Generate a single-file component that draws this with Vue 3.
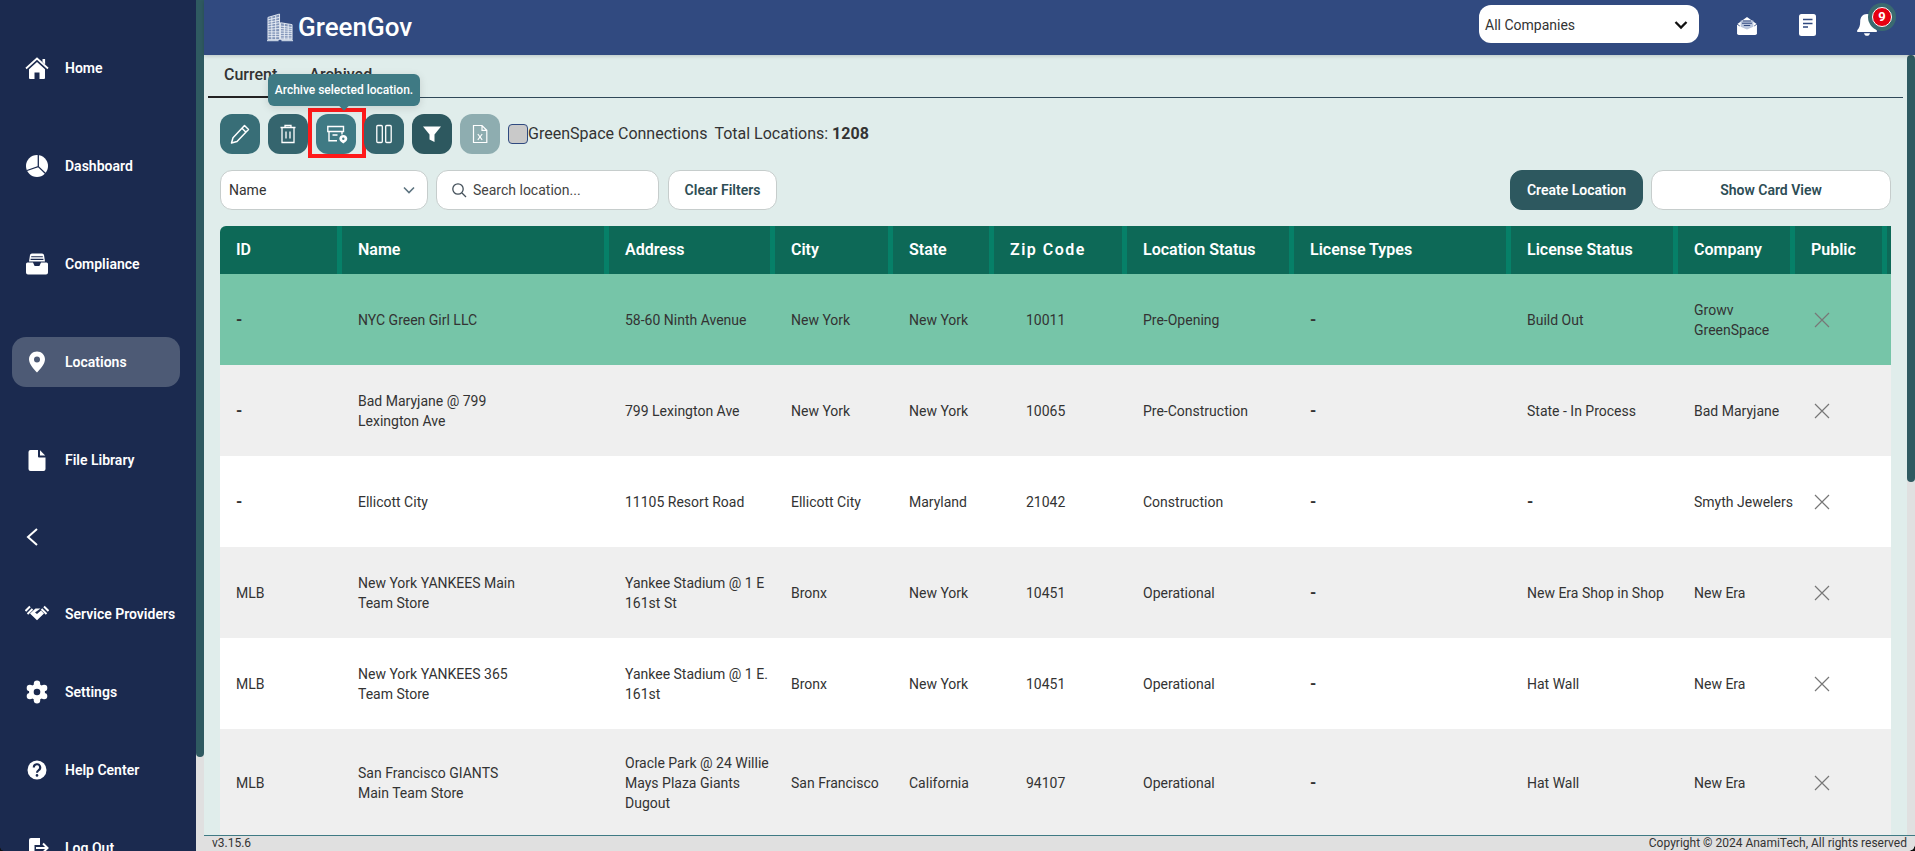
<script setup>
const rows = [
  { id: '-', name: 'NYC Green Girl LLC', address: '58-60 Ninth Avenue', city: 'New York', state: 'New York', zip: '10011', status: 'Pre-Opening', types: '-', license: 'Build Out', company: 'Growv\nGreenSpace', tone: 'picked' },
  { id: '-', name: 'Bad Maryjane @ 799\nLexington Ave', address: '799 Lexington Ave', city: 'New York', state: 'New York', zip: '10065', status: 'Pre-Construction', types: '-', license: 'State - In Process', company: 'Bad Maryjane', tone: 'grey' },
  { id: '-', name: 'Ellicott City', address: '11105 Resort Road', city: 'Ellicott City', state: 'Maryland', zip: '21042', status: 'Construction', types: '-', license: '-', company: 'Smyth Jewelers', tone: 'white' },
  { id: 'MLB', name: 'New York YANKEES Main\nTeam Store', address: 'Yankee Stadium @ 1 E\n161st St', city: 'Bronx', state: 'New York', zip: '10451', status: 'Operational', types: '-', license: 'New Era Shop in Shop', company: 'New Era', tone: 'grey' },
  { id: 'MLB', name: 'New York YANKEES 365\nTeam Store', address: 'Yankee Stadium @ 1 E.\n161st', city: 'Bronx', state: 'New York', zip: '10451', status: 'Operational', types: '-', license: 'Hat Wall', company: 'New Era', tone: 'white' },
  { id: 'MLB', name: 'San Francisco GIANTS\nMain Team Store', address: 'Oracle Park @ 24 Willie\nMays Plaza Giants\nDugout', city: 'San Francisco', state: 'California', zip: '94107', status: 'Operational', types: '-', license: 'Hat Wall', company: 'New Era', tone: 'grey', tall: true },
]
const heads = ['ID', 'Name', 'Address', 'City', 'State', 'Zip Code', 'Location Status', 'License Types', 'License Status', 'Company', 'Public']
const fields = ['id', 'name', 'address', 'city', 'state', 'zip', 'status', 'types', 'license', 'company']
</script>

<template>
  <div class="app">
    <aside class="side">
      <nav class="nav">
        <a class="item">
          <svg class="ni" viewBox="0 0 24 24"><path d="M1 12.5 12 2.5l11 10" fill="none" stroke="#fff" stroke-width="1.8"/><path d="M17.5 3h2.6v5.5l-2.6-2.4z" fill="#fff"/><path d="M4 13.2 12 6l8 7.2V22a1 1 0 0 1-1 1h-4.5v-6.5h-5V23H5a1 1 0 0 1-1-1z" fill="#fff"/></svg>
          <span>Home</span>
        </a>
        <a class="item">
          <svg class="ni" viewBox="0 0 24 24"><circle cx="12" cy="12" r="11" fill="#fff"/><path d="M13.3 0.8V12.6L2 16.5M13.3 12.6 21 20" fill="none" stroke="#1b2a4f" stroke-width="1.3"/></svg>
          <span>Dashboard</span>
        </a>
        <a class="item">
          <svg class="ni" viewBox="0 0 24 24"><path d="M4 9.500 5 3a2 2 0 0 1 2-1.600h10A2 2 0 0 1 19 3l1 6.500H4z" fill="#fff"/><path d="M6.200 4.800h11.600M5.600 7.400h12.800" stroke="#1b2a4f" stroke-width="1.100"/><path d="M2.500 10.500H8l1.600 3.400h4.800l1.600-3.400h5.500a1.500 1.500 0 0 1 1.500 1.500v8.500a2 2 0 0 1-2 2H3a2 2 0 0 1-2-2V12a1.500 1.500 0 0 1 1.500-1.500z" fill="#fff"/></svg>
          <span>Compliance</span>
        </a>
        <a class="item active">
          <svg class="ni" viewBox="0 0 24 24"><path fill-rule="evenodd" d="M12 1.500c4.500 0 8 3.400 8 7.800 0 5-5 10-8 13.200-3-3.200-8-8.200-8-13.200 0-4.400 3.500-7.800 8-7.800zm0 5a3 3 0 1 0 0 6 3 3 0 0 0 0-6z" fill="#fff"/></svg>
          <span>Locations</span>
        </a>
        <a class="item">
          <svg class="ni" viewBox="0 0 24 24"><path d="M5.500 2H13v6.500a1 1 0 0 0 1 1h6.500V21a2 2 0 0 1-2 2h-13a2 2 0 0 1-2-2V4a2 2 0 0 1 2-2z" fill="#fff"/><path d="M15 2.300 20.200 7.500H15z" fill="#fff"/></svg>
          <span>File Library</span>
        </a>
        <a class="collapse">
          <svg width="14" height="20" viewBox="0 0 14 20"><path d="M12 2 3 10l9 8" fill="none" stroke="#fff" stroke-width="2"/></svg>
        </a>
        <div class="lower">
          <a class="item low">
            <svg class="ni" viewBox="0 0 24 24"><path d="M.5 9 5 4.500M2.500 12 7.500 7M23.500 9 19 4.500M21.500 12 16.500 7" stroke="#fff" stroke-width="2" fill="none"/><path d="M5 11.500 10.500 6.500h5L10 10.500l2 1.500 4-3.500 3 3-7 6.800z" fill="#fff"/></svg>
            <span>Service Providers</span>
          </a>
          <a class="item low">
            <svg class="ni" viewBox="0 0 24 24"><g fill="#fff"><circle cx="12" cy="12" r="8"/><circle cx="12" cy="3.800" r="3.200"/><circle cx="12" cy="20.200" r="3.200"/><circle cx="4.900" cy="7.900" r="3.200"/><circle cx="19.100" cy="7.900" r="3.200"/><circle cx="4.900" cy="16.100" r="3.200"/><circle cx="19.100" cy="16.100" r="3.200"/></g><circle cx="12" cy="12" r="3.300" fill="#1b2a4f"/></svg>
            <span>Settings</span>
          </a>
          <a class="item low">
            <svg class="ni" viewBox="0 0 24 24"><circle cx="12" cy="12" r="9.500" fill="#fff"/><path d="M8.800 9.500a3.200 3.200 0 1 1 4.700 2.800c-1 .6-1.500 1.200-1.500 2.400" fill="none" stroke="#1b2a4f" stroke-width="2.100"/><circle cx="12" cy="17.400" r="1.300" fill="#1b2a4f"/></svg>
            <span>Help Center</span>
          </a>
          <a class="item low">
            <svg class="ni" viewBox="0 0 24 24"><path d="M6 2h9v7H9.500v6H15v7H6a2 2 0 0 1-2-2V4a2 2 0 0 1 2-2z" fill="#fff"/><path d="M11 12h11M18 7.500l4.500 4.500-4.500 4.500" fill="none" stroke="#fff" stroke-width="2"/></svg>
            <span>Log Out</span>
          </a>
        </div>
      </nav>
    </aside>
    <div class="side-bar"><div class="side-thumb"></div></div>

    <div class="main">
      <header class="top">
        <div class="brand">
          <svg class="logo" viewBox="0 0 28 30">
            <g fill="none" stroke="#eef2f8" stroke-width="0.900">
              <path d="M1 27V4l12-3.500V27z" fill="#8094b8"/>
              <path d="M14 27V9.500l12 2V27z" fill="#8094b8"/>
              <path d="M1 6.500 13 4M1 9l12-2M1 11.500l12-2M1 14l12-1.500M1 16.500l12-1M1 19h12M1 21.500h12M1 24h12M14 13l12 1.500M14 15.500l12 1M14 18l12 .5M14 20.500h12M14 23h12M14 25.500h12"/>
              <path d="M5 3v24M9 2v25M18 10v17M22 11v16"/>
            </g>
            <path d="M0 28h12M15 28h12" stroke="#c3cfe0" stroke-width="1.500"/>
          </svg>
          <span class="brand-name">GreenGov</span>
        </div>
        <div class="top-right">
          <div class="co-select">
            <span>All Companies</span>
            <svg width="14" height="10" viewBox="0 0 14 10"><path d="M1.500 2 7 7.500 12.500 2" fill="none" stroke="#111" stroke-width="2.300"/></svg>
          </div>
          <div class="top-ic">
            <svg width="22" height="19" viewBox="0 0 24 21"><path d="M1 9 12 1l11 8v10a2 2 0 0 1-2 2H3a2 2 0 0 1-2-2z" fill="#fff"/><path d="M5 5h14v7l-7 3-7-3z" fill="#b9c5dc"/><path d="M7.500 5.500h9M6.500 8h11M8.500 10.500h7" stroke="#314a80" stroke-width="1.100"/><path d="M1 9l3 2M23 9l-3 2" stroke="#314a80" stroke-width="1"/></svg>
          </div>
          <div class="top-ic">
            <svg width="17" height="22" viewBox="0 0 17 22"><rect x="0" y="0" width="17" height="22" rx="2.500" fill="#fff"/><path d="M4 5.500h9.500M4 9.500h9.500M4 13h5" stroke="#314a80" stroke-width="1.600"/></svg>
          </div>
          <div class="top-ic bell">
            <svg width="20" height="22" viewBox="0 0 20 22"><path d="M10 0c4.500 0 6.800 3.500 6.800 7.500 0 4 .8 6.500 3 8.800V18H.2v-1.700c2.200-2.300 3-4.800 3-8.800C3.200 3.500 5.500 0 10 0z" fill="#fff"/><path d="M7 19.200h6c-.3 1.700-1.500 2.600-3 2.600s-2.700-.9-3-2.600z" fill="#fff"/></svg>
            <span class="badge"><b>9</b></span>
          </div>
        </div>
      </header>

      <div class="mid">
        <section class="page">
          <div class="tabs">
            <span class="tab on">Current</span>
            <span class="tab">Archived</span>
          </div>

          <div class="tools">
            <button class="tb t1">
              <svg width="24" height="24" viewBox="0 0 24 24"><path d="M16.500 3.500 20.500 7.500 9 19.500 3.500 21l1.500-5.300z M14 6.200l4 4" fill="none" stroke="#fff" stroke-width="1.500" stroke-linejoin="round"/></svg>
            </button>
            <button class="tb t2">
              <svg width="24" height="24" viewBox="0 0 24 24"><path d="M4.500 5.500h15M9 5.500V3.500h6v2M6 5.500V20.500h12V5.500M10 9.500v7M14 9.500v7" fill="none" stroke="#fff" stroke-width="1.300"/></svg>
            </button>
            <button class="tb t3">
              <svg width="24" height="24" viewBox="0 0 24 24"><path d="M3.800 4.500h15.700v5H3.800zM5 9.500V18.800H13M18 9.500v3M8.500 13h5" fill="none" stroke="#fff" stroke-width="1.400"/><path fill-rule="evenodd" d="M19.300 13c2.200 0 4 1.700 4 3.700 0 1.900-2.400 3.600-4 4.800-1.600-1.200-4-2.900-4-4.800 0-2 1.800-3.700 4-3.700zm0 2.500a1.200 1.200 0 1 0 0 2.400 1.200 1.200 0 0 0 0-2.400z" fill="#fff"/></svg>
              <span class="mark"></span>
            </button>
            <button class="tb t2">
              <svg width="24" height="24" viewBox="0 0 24 24"><rect x="4.800" y="3.500" width="5.500" height="17" rx="1" fill="none" stroke="#fff" stroke-width="1.300"/><rect x="13.700" y="3.500" width="5.500" height="17" rx="1" fill="none" stroke="#fff" stroke-width="1.300"/></svg>
            </button>
            <button class="tb t5">
              <svg width="24" height="24" viewBox="0 0 24 24"><path d="M3 4.500h18l-6.500 8v7.500l-5-2.500v-5z" fill="#fff"/></svg>
            </button>
            <button class="tb t6">
              <svg width="24" height="24" viewBox="0 0 24 24"><path d="M5.500 3.500H14l4.800 4.800v12.200H5.500zM14 3.500v4.800h4.800" fill="none" stroke="#fff" stroke-width="1.200"/><path d="M9.800 12l4.400 5.800M14.200 12l-4.400 5.800" stroke="#fff" stroke-width="1.100"/></svg>
            </button>
            <label class="check"><i class="box"></i><span class="conn">GreenSpace Connections</span></label>
            <span class="total">Total Locations: <b>1208</b></span>
            <div class="tip">Archive selected location.</div>
          </div>

          <div class="filters">
            <div class="field pick">
              <span>Name</span>
              <svg width="14" height="10" viewBox="0 0 14 10"><path d="M2 2.500 7 7.500l5-5" fill="none" stroke="#5d7480" stroke-width="1.600"/></svg>
            </div>
            <div class="field search">
              <svg width="18" height="18" viewBox="0 0 18 18"><circle cx="8" cy="8" r="5.200" fill="none" stroke="#44505a" stroke-width="1.300"/><path d="M12 12l4 4" stroke="#44505a" stroke-width="1.300"/></svg>
              <span>Search location...</span>
            </div>
            <button class="btn clear">Clear Filters</button>
            <div class="spacer"></div>
            <button class="btn create">Create Location</button>
            <button class="btn card">Show Card View</button>
          </div>

          <div class="table">
            <div class="row head">
              <div v-for="h in heads" :key="h" class="hc" :class="{ 'hc-zip': h === 'Zip Code' }">{{ h }}</div>
              <div></div>
            </div>
            <div v-for="(r, i) in rows" :key="i" class="row body" :class="[r.tone, { tall: r.tall }]">
              <div v-for="f in fields" :key="f" class="c" :class="{ 'c-zip': f === 'zip', dash: r[f] === '-' }">{{ r[f] }}</div>
              <div class="c">
                <svg width="22" height="22" viewBox="0 0 22 22"><path d="M4 4l14 14M18 4 4 18" stroke="#777" stroke-width="1.200"/></svg>
              </div>
              <div></div>
            </div>
          </div>
        </section>
        <div class="page-bar"><div class="page-thumb"></div></div>
      </div>

      <footer class="foot">
        <span>v3.15.6</span>
        <span>Copyright © 2024 AnamiTech, All rights reserved</span>
      </footer>
    </div>
    <i class="corner left"></i>
    <i class="corner right"></i>
  </div>
</template>

<style>
html, body { margin: 0; overflow: hidden; }
</style>

<style scoped>
.app {
  position: relative;
  display: flex;
  width: 1915px;
  height: 851px;
  overflow: hidden;
  font-family: Roboto, "Liberation Sans", sans-serif;
  color: #333;
}
.side {
  flex: 0 0 196px;
  background: #1b2a4f;
  overflow: hidden;
}
.nav { padding-top: 19px; }
.item {
  height: 98px;
  margin: 0 16px 0 12px;
  padding-left: 13px;
  display: flex;
  align-items: center;
  gap: 16px;
  color: #fff;
  font-size: 14px;
  font-weight: 600;
  box-sizing: border-box;
  position: relative;
}
.ni { width: 24px; height: 24px; flex: none; position: relative; }
.item span { position: relative; }
.item.active::before {
  content: "";
  position: absolute;
  left: 0;
  right: 0;
  top: 24px;
  bottom: 24px;
  background: #4d5a75;
  border-radius: 14px;
}
.collapse {
  height: 56px;
  margin-bottom: 10px;
  padding-left: 25px;
  display: flex;
  align-items: center;
}
.item.low { height: 78px; margin-right: 0; }
.side-bar { flex: 0 0 8px; background: #e0e0e0; }
.side-thumb { height: 757px; background: #2f5a61; border-radius: 0 0 4px 4px; }
.main { flex: 1; display: flex; flex-direction: column; min-width: 0; }
.top {
  flex: 0 0 55px;
  background: #314a80;
  display: flex;
  align-items: center;
  justify-content: space-between;
  padding: 0 36px 0 63px;
  box-shadow: 0 1px 4px rgba(0, 0, 0, .18);
  position: relative;
  z-index: 3;
}
.brand { display: flex; align-items: center; gap: 4px; }
.logo { width: 27px; height: 30px; }
.brand-name { color: #fff; font-size: 26px; font-weight: 500; margin-top: -2px; }
.top-right { display: flex; align-items: center; gap: 36px; }
.co-select {
  width: 220px;
  height: 38px;
  box-sizing: border-box;
  background: #fff;
  border-radius: 12px;
  padding: 1px 11px 0 6px;
  display: flex;
  align-items: center;
  justify-content: space-between;
  font-size: 14px;
  color: #333;
  margin-top: -7px;
}
.top-ic { width: 24px; display: flex; justify-content: center; position: relative; margin-top: -5px; }
.badge {
  position: absolute;
  left: 13px;
  top: -11px;
  width: 28px;
  height: 28px;
  border-radius: 50%;
  background: #3a6a70;
  display: flex;
  align-items: center;
  justify-content: center;
}
.badge b {
  width: 18px;
  height: 18px;
  border: 1px solid #fff;
  border-radius: 50%;
  background: #e60012;
  color: #fff;
  font-size: 13px;
  line-height: 18px;
  text-align: center;
}
.mid { flex: 1; display: flex; min-height: 0; }
.page {
  flex: 1;
  background: #e0edeb;
  padding: 0 16px;
  overflow: hidden;
  min-width: 0;
}
.tabs {
  display: flex;
  height: 43px;
  box-sizing: border-box;
  margin: 0 -12px;
  border-bottom: 1px solid #2f4858;
}
.tab {
  padding: 10px 16px 0;
  line-height: 20px;
  font-size: 16px;
  font-weight: 500;
  color: #333;
  box-sizing: border-box;
}
.tab.on { border-bottom: 2px solid #222; height: 43px; }
.tools {
  position: relative;
  display: flex;
  align-items: center;
  gap: 8px;
  margin-top: 16px;
  height: 40px;
}
.tb {
  position: relative;
  width: 40px;
  height: 40px;
  padding: 0;
  border: 0;
  border-radius: 12px;
  display: flex;
  align-items: center;
  justify-content: center;
}
.t1 { background: #386e77; }
.t2 { background: #35656e; }
.t3 { background: #3f7a84; }
.t5 { background: #2d585f; }
.t6 { background: #8eadb0; }
.mark {
  position: absolute;
  left: -8px;
  right: -10px;
  top: -6px;
  bottom: -4px;
  border: 4px solid #ff1a1a;
  box-sizing: border-box;
}
.check { display: flex; align-items: center; }
.box {
  width: 20px;
  height: 20px;
  box-sizing: border-box;
  background: #c9c9c9;
  border: 1px solid #2f4a80;
  border-radius: 4px;
}
.conn, .total { font-size: 16px; color: #333; }
.conn { margin-top: -2px; }
.total { margin-left: -1px; margin-top: -2px; }
.tip {
  position: absolute;
  left: 48px;
  top: -40px;
  width: 152px;
  height: 32px;
  background: #3f7a84;
  border-radius: 6px;
  color: #fff;
  font-size: 12px;
  font-weight: 500;
  line-height: 32px;
  text-align: center;
  box-shadow: 0 2px 8px rgba(0, 0, 0, .12);
}
.tip::after {
  content: "";
  position: absolute;
  left: 72px;
  bottom: -3px;
  width: 8px;
  height: 8px;
  background: #3f7a84;
  transform: rotate(45deg);
}
.filters {
  display: flex;
  align-items: center;
  gap: 8px;
  margin-top: 16px;
  height: 40px;
}
.field, .btn {
  height: 40px;
  box-sizing: border-box;
  border: 1px solid #c6cdcc;
  border-radius: 12px;
  background: #fff;
  font-family: inherit;
  font-size: 14px;
  display: flex;
  align-items: center;
}
.pick { width: 208px; padding: 0 11px 0 8px; justify-content: space-between; }
.search { width: 223px; padding-left: 13px; gap: 5px; color: #444; }
.btn { justify-content: center; font-weight: 600; color: #2d4d55; padding: 0; }
.clear { width: 109px; margin-left: 1px; }
.spacer { flex: 1; }
.create { width: 133px; background: #2d585f; border-color: #2d585f; color: #fff; }
.card { width: 240px; }
.table { margin-top: 16px; border-radius: 6px 0 0 0; overflow: hidden; }
.row {
  display: grid;
  grid-template-columns: 122px 267px 166px 118px 101px 133px 167px 217px 167px 117px 92px 4px;
}
.head { background: #0d6957; height: 48px; }
.hc {
  border-right: 5px solid #068068;
  padding-left: 16px;
  color: #fff;
  font-size: 16px;
  font-weight: 600;
  line-height: 48px;
}
.hc-zip { letter-spacing: 1.5px; }
.body { height: 91px; font-size: 14px; line-height: 20px; color: #333; }
.body.tall { height: 108px; }
.picked { background: #76c5a8; }
.grey { background: #efefef; }
.white { background: #fff; }
.c {
  padding-left: 16px;
  display: flex;
  align-items: center;
  white-space: pre-line;
}
.c-zip { padding-left: 32px; }
.dash { font-weight: 700; font-size: 16px; }
.page-bar { flex: 0 0 8px; background: #e0e0e0; }
.page-thumb { height: 427px; background: #2f5a61; border-radius: 4px; }
.foot {
  flex: 0 0 16px;
  box-sizing: border-box;
  border-top: 1px solid #3f7a84;
  background: #e0e0e0;
  padding: 0 8px;
  display: flex;
  justify-content: space-between;
  align-items: center;
  font-size: 12px;
  color: #333;
  line-height: 15px;
}
.corner { position: absolute; bottom: 0; width: 6px; height: 6px; }
.corner.right { right: 0; background: radial-gradient(circle at 0 0, transparent 5.500px, #111 6px); }
.corner.left { left: 0; width: 4px; height: 4px; background: radial-gradient(circle at 100% 0, transparent 3.500px, #111 4px); }
</style>
